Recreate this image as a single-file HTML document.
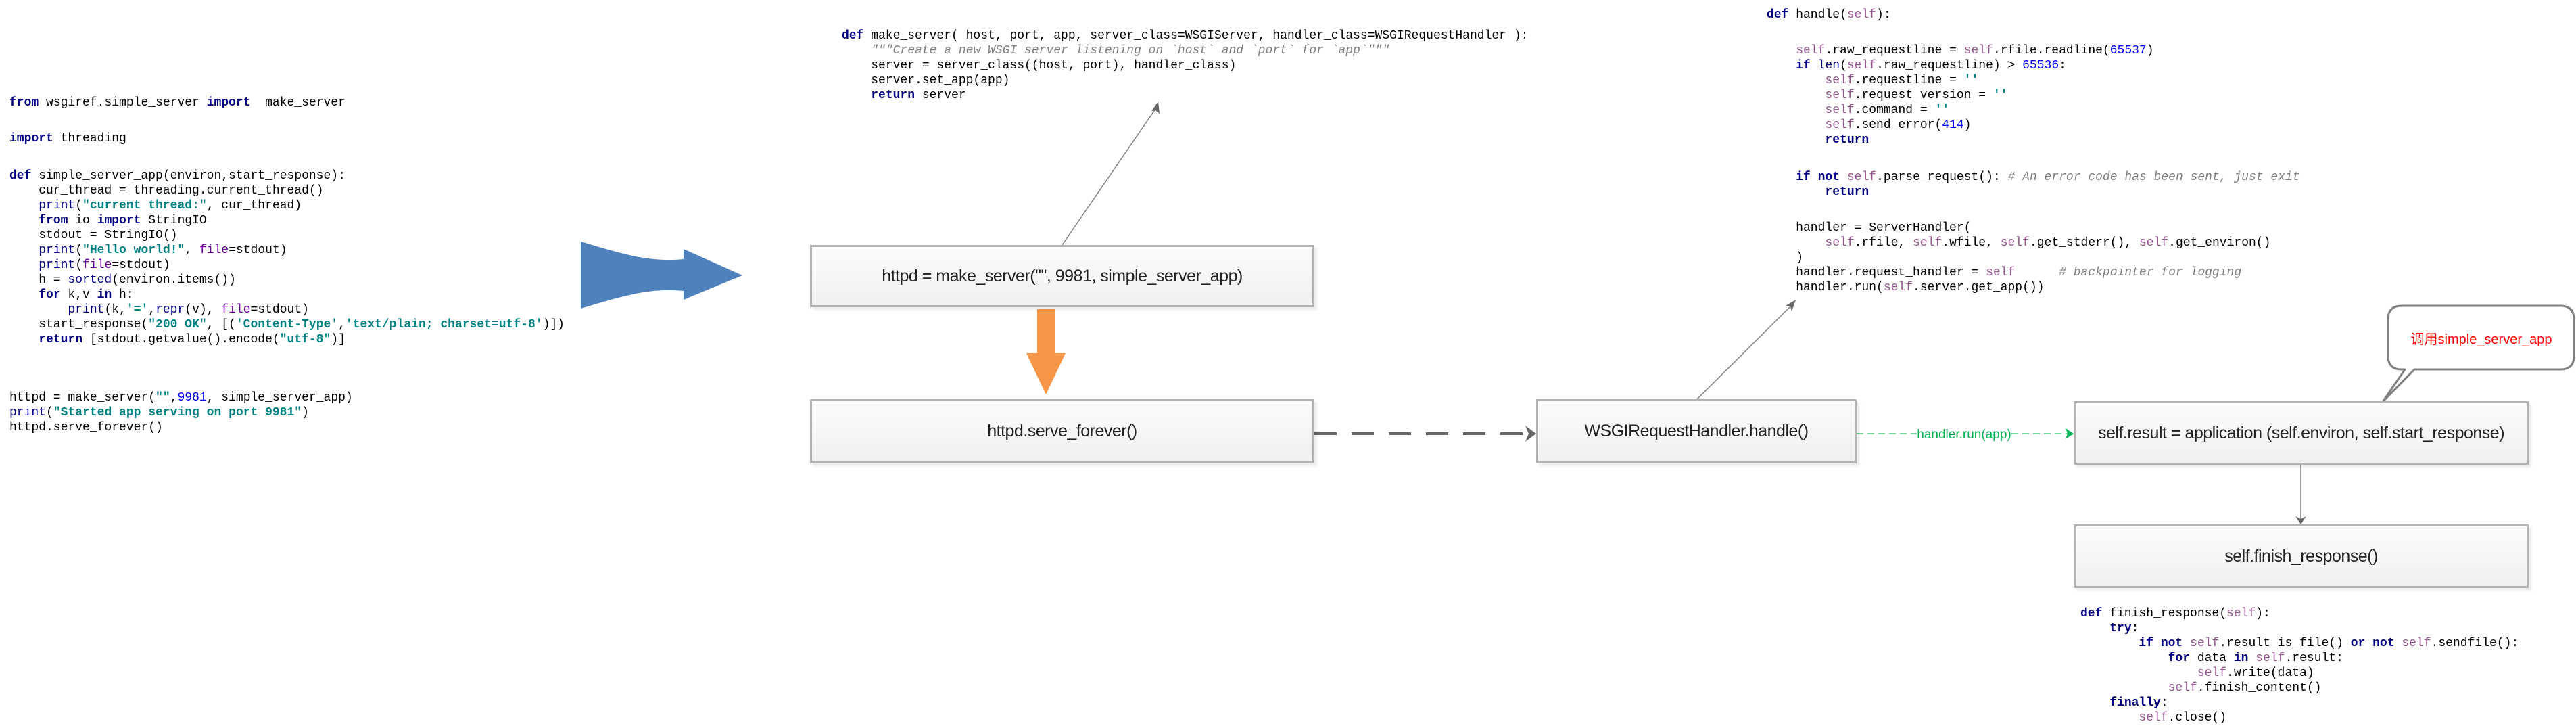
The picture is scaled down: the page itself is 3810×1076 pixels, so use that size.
<!DOCTYPE html>
<html><head><meta charset="utf-8">
<style>
html,body{margin:0;padding:0;background:#fff;}
body{width:3810px;height:1076px;position:relative;overflow:hidden;}
pre{position:absolute;margin:0;font-family:"Liberation Mono","DejaVu Sans Mono",monospace;font-size:18px;line-height:22px;color:#000;}
.k{color:#000080;font-weight:bold}
.s{color:#008080;font-weight:bold}
.b{color:#000080}
.p{color:#660099}
.n{color:#0000ff}
.f{color:#94558d}
.c{color:#808080;font-style:italic}
.box{position:absolute;box-sizing:border-box;border:3px solid #b3b3b3;background:linear-gradient(#fcfcfc,#f0f0f0);box-shadow:4px 4px 3px rgba(0,0,0,0.07);display:flex;align-items:center;justify-content:center;font-family:"Liberation Sans",Arial,sans-serif;font-size:25px;color:#222;letter-spacing:-0.5px;}
svg{position:absolute;left:0;top:0;}
</style></head><body>

<svg width="3810" height="1076">
  <path d="M859,357 C920,375 960,388 1011,383 L1011,368 L1098,407 L1011,443 L1011,430 C960,425 920,438 859,456 Z" fill="#4f81bd"/>
  <path d="M1534,457 L1560,457 L1560,522 L1576,522 L1547,583 L1518,522 L1534,522 Z" fill="#f79646"/>
  <line x1="1571" y1="362" x2="1711" y2="158" stroke="#808080" stroke-width="1.5"/>
  <path d="M1713,150 L1715,168 L1709,163 L1703,164 Z" fill="#666"/>
  <line x1="2510" y1="590" x2="2651" y2="450" stroke="#808080" stroke-width="1.5"/>
  <path d="M2656,443 L2650,460 L2648,453 L2641,452 Z" fill="#666"/>
  <line x1="1944" y1="641" x2="2262" y2="641" stroke="#666" stroke-width="4" stroke-dasharray="33,22"/>
  <path d="M2256,629 L2272,641 L2256,653 L2261,641 Z" fill="#666"/>
  <line x1="2746" y1="641" x2="2835" y2="641" stroke="#7fd6a0" stroke-width="2" stroke-dasharray="10,6"/>
  <line x1="2975" y1="641" x2="3060" y2="641" stroke="#7fd6a0" stroke-width="2" stroke-dasharray="10,6"/>
  <path d="M3055,633 L3067,641 L3055,649 L3058,641 Z" fill="#00b050"/>
  <line x1="3403" y1="687" x2="3403" y2="770" stroke="#808080" stroke-width="1.5"/>
  <path d="M3395,763 L3403,775 L3411,763 L3403,767 Z" fill="#666"/>
  <path d="M3552,452 L3787,452 Q3807,452 3807,472 L3807,526 Q3807,546 3787,546 L3571,546 L3524,594 L3557,546 L3552,546 Q3532,546 3532,526 L3532,472 Q3532,452 3552,452 Z" fill="#fff" stroke="#808080" stroke-width="3" stroke-linejoin="round"/>
  <text x="3670" y="508" text-anchor="middle" font-family="'Liberation Sans','Noto Sans CJK SC',sans-serif" font-size="20" fill="#ff0000">调用simple_server_app</text>
  <text x="2905" y="648" text-anchor="middle" font-family="'Liberation Sans',sans-serif" font-size="19" fill="#00b050">handler.run(app)</text>
</svg>

<pre style="left:14px;top:141px"><span class="k">from</span> wsgiref.simple_server <span class="k">import</span>  make_server</pre>
<pre style="left:14px;top:194px"><span class="k">import</span> threading</pre>
<pre style="left:14px;top:249px"><span class="k">def</span> simple_server_app(environ,start_response):
    cur_thread = threading.current_thread()
    <span class="b">print</span>(<span class="s">"current thread:"</span>, cur_thread)
    <span class="k">from</span> io <span class="k">import</span> StringIO
    stdout = StringIO()
    <span class="b">print</span>(<span class="s">"Hello world!"</span>, <span class="p">file</span>=stdout)
    <span class="b">print</span>(<span class="p">file</span>=stdout)
    h = <span class="b">sorted</span>(environ.items())
    <span class="k">for</span> k,v <span class="k">in</span> h:
        <span class="b">print</span>(k,<span class="s">'='</span>,<span class="b">repr</span>(v), <span class="p">file</span>=stdout)
    start_response(<span class="s">"200 OK"</span>, [(<span class="s">'Content-Type'</span>,<span class="s">'text/plain; charset=utf-8'</span>)])
    <span class="k">return</span> [stdout.getvalue().encode(<span class="s">"utf-8"</span>)]</pre>
<pre style="left:14px;top:577px">httpd = make_server(<span class="s">""</span>,<span class="n">9981</span>, simple_server_app)
<span class="b">print</span>(<span class="s">"Started app serving on port 9981"</span>)
httpd.serve_forever()</pre>

<pre style="left:1245px;top:42px"><span class="k">def</span> make_server( host, port, app, server_class=WSGIServer, handler_class=WSGIRequestHandler ):
    <span class="c">"""Create a new WSGI server listening on `host` and `port` for `app`"""</span>
    server = server_class((host, port), handler_class)
    server.set_app(app)
    <span class="k">return</span> server</pre>

<pre style="left:2613px;top:11px"><span class="k">def</span> handle(<span class="f">self</span>):</pre>
<pre style="left:2613px;top:64px">    <span class="f">self</span>.raw_requestline = <span class="f">self</span>.rfile.readline(<span class="n">65537</span>)
    <span class="k">if</span> <span class="b">len</span>(<span class="f">self</span>.raw_requestline) &gt; <span class="n">65536</span>:
        <span class="f">self</span>.requestline = <span class="s">''</span>
        <span class="f">self</span>.request_version = <span class="s">''</span>
        <span class="f">self</span>.command = <span class="s">''</span>
        <span class="f">self</span>.send_error(<span class="n">414</span>)
        <span class="k">return</span></pre>
<pre style="left:2613px;top:251px">    <span class="k">if not</span> <span class="f">self</span>.parse_request(): <span class="c"># An error code has been sent, just exit</span>
        <span class="k">return</span></pre>
<pre style="left:2613px;top:326px">    handler = ServerHandler(
        <span class="f">self</span>.rfile, <span class="f">self</span>.wfile, <span class="f">self</span>.get_stderr(), <span class="f">self</span>.get_environ()
    )
    handler.request_handler = <span class="f">self</span>      <span class="c"># backpointer for logging</span>
    handler.run(<span class="f">self</span>.server.get_app())</pre>

<pre style="left:3077px;top:896px"><span class="k">def</span> finish_response(<span class="f">self</span>):
    <span class="k">try</span>:
        <span class="k">if not</span> <span class="f">self</span>.result_is_file() <span class="k">or not</span> <span class="f">self</span>.sendfile():
            <span class="k">for</span> data <span class="k">in</span> <span class="f">self</span>.result:
                <span class="f">self</span>.write(data)
            <span class="f">self</span>.finish_content()
    <span class="k">finally</span>:
        <span class="f">self</span>.close()</pre>

<div class="box" style="left:1198px;top:362px;width:746px;height:92px">httpd = make_server("", 9981, simple_server_app)</div>
<div class="box" style="left:1198px;top:590px;width:746px;height:95px">httpd.serve_forever()</div>
<div class="box" style="left:2272px;top:590px;width:474px;height:95px">WSGIRequestHandler.handle()</div>
<div class="box" style="left:3067px;top:593px;width:673px;height:94px">self.result = application (self.environ, self.start_response)</div>
<div class="box" style="left:3067px;top:775px;width:673px;height:94px">self.finish_response()</div>

</body></html>
